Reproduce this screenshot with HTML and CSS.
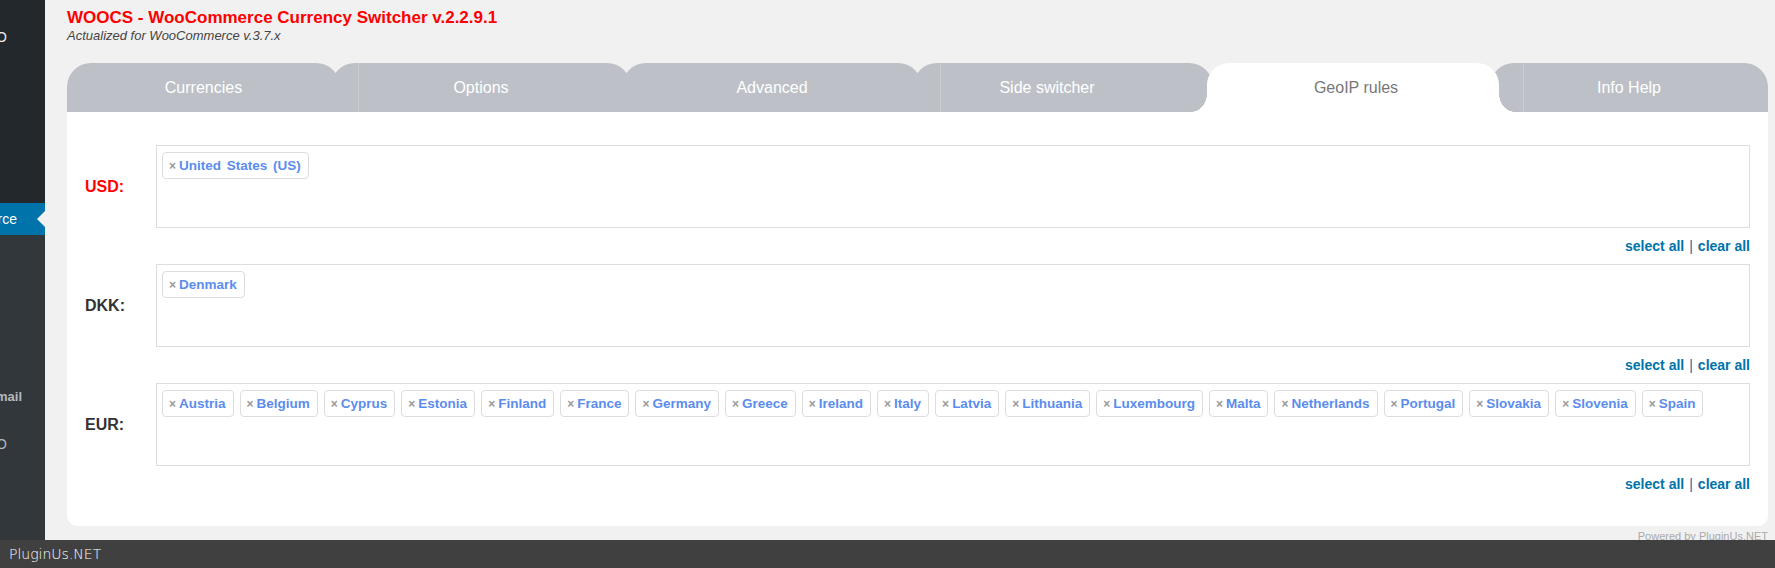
FILE: index.html
```html
<!DOCTYPE html>
<html lang="en">
<head>
  <meta charset="UTF-8">
  <title>WOOCS - GeoIP rules</title>
  <link rel="stylesheet" href="styles.css">
</head>
<body>

<div class="admin">
  <aside class="admin-menu">
    <div class="menu-top">
      <div class="menu-item first">SEO</div>
    </div>
    <div class="menu-item current">WooCommerce</div>
    <div class="submenu">
      <div class="menu-item sub-email">Email</div>
      <div class="menu-item sub-pro">PRO</div>
    </div>
  </aside>

  <main class="wp-content">
    <h2 class="woocs-title">WOOCS - WooCommerce Currency Switcher v.2.2.9.1</h2>
    <div class="woocs-subtitle">Actualized for WooCommerce v.3.7.x</div>

    <nav class="tabs">
      <div class="tab tab-currencies">Currencies</div>
      <div class="tab tab-options">Options</div>
      <div class="tab tab-advanced">Advanced</div>
      <div class="tab tab-side">Side switcher</div>
      <div class="tab tab-geoip active">GeoIP rules</div>
      <div class="tab tab-info">Info Help</div>
    </nav>

    <section class="panel">
      <div class="geo-row">
        <div class="geo-label default">USD:</div>
        <div class="geo-field">
          <div class="geo-box">
            <span class="tag"><i>×</i>United States (US)</span>
          </div>
          <div class="geo-links"><a href="#">select all</a><span class="sep">|</span><a href="#">clear all</a></div>
        </div>
      </div>

      <div class="geo-row">
        <div class="geo-label">DKK:</div>
        <div class="geo-field">
          <div class="geo-box">
            <span class="tag"><i>×</i>Denmark</span>
          </div>
          <div class="geo-links"><a href="#">select all</a><span class="sep">|</span><a href="#">clear all</a></div>
        </div>
      </div>

      <div class="geo-row">
        <div class="geo-label">EUR:</div>
        <div class="geo-field">
          <div class="geo-box">
            <span class="tag"><i>×</i>Austria</span>
            <span class="tag"><i>×</i>Belgium</span>
            <span class="tag"><i>×</i>Cyprus</span>
            <span class="tag"><i>×</i>Estonia</span>
            <span class="tag"><i>×</i>Finland</span>
            <span class="tag"><i>×</i>France</span>
            <span class="tag"><i>×</i>Germany</span>
            <span class="tag"><i>×</i>Greece</span>
            <span class="tag"><i>×</i>Ireland</span>
            <span class="tag"><i>×</i>Italy</span>
            <span class="tag"><i>×</i>Latvia</span>
            <span class="tag"><i>×</i>Lithuania</span>
            <span class="tag"><i>×</i>Luxembourg</span>
            <span class="tag"><i>×</i>Malta</span>
            <span class="tag"><i>×</i>Netherlands</span>
            <span class="tag"><i>×</i>Portugal</span>
            <span class="tag"><i>×</i>Slovakia</span>
            <span class="tag"><i>×</i>Slovenia</span>
            <span class="tag"><i>×</i>Spain</span>
          </div>
          <div class="geo-links"><a href="#">select all</a><span class="sep">|</span><a href="#">clear all</a></div>
        </div>
      </div>
    </section>

    <div class="powered">Powered by PluginUs.NET</div>
  </main>
</div>

<footer class="pluginus-bar">PluginUs.NET</footer>

</body>
</html>
```

FILE: styles.css
```css
* {
  box-sizing: border-box;
}

body {
  margin: 0;
  height: 568px;
  overflow: hidden;
  background: #f1f1f1;
  font-family: "Liberation Sans", Arial, sans-serif;
  color: #333;
}

.admin {
  display: flex;
  height: 540px;
  overflow: hidden;
}

/* left admin menu, only its right edge is visible */
.admin-menu {
  width: 45px;
  flex-shrink: 0;
  display: flex;
  flex-direction: column;
  background: #32373c;
  font-size: 14px;
}

.menu-top {
  height: 203px;
  background: #23282d;
  padding-top: 28px;
}

.menu-item {
  display: flex;
  justify-content: flex-end;
  overflow: hidden;
  white-space: nowrap;
  color: #eee;
  line-height: 18px;
}

.menu-item.first {
  padding-right: 38px;
}

.menu-item.current {
  position: relative;
  height: 32px;
  align-items: center;
  padding-right: 28px;
  background: #0073aa;
  color: #fff;
  overflow: visible;
}

.menu-item.current::after {
  content: "";
  position: absolute;
  right: 0;
  top: 8px;
  border: 8px solid transparent;
  border-right-color: #f1f1f1;
}

.submenu {
  flex: 1;
  padding-top: 153px;
}

.submenu .menu-item {
  color: #b4b9be;
}

.sub-email {
  font-size: 13px;
  font-weight: bold;
  padding-right: 23px;
  margin-bottom: 29px;
}

.sub-pro {
  padding-right: 38px;
}

/* main area */
.wp-content {
  flex: 1;
  padding: 7px 7px 0 22px;
}

.woocs-title {
  margin: 0;
  font-size: 17px;
  line-height: 21px;
  color: #ff0000;
}

.woocs-subtitle {
  font-size: 13px;
  line-height: 16px;
  font-style: italic;
  color: #444;
}

.tabs {
  display: flex;
  height: 49px;
  margin-top: 19px;
}

.tab {
  position: relative;
  display: flex;
  align-items: center;
  justify-content: center;
  height: 49px;
  background: #bdc1c7;
  color: #fff;
  font-size: 16px;
  border-radius: 24px 24px 0 0;
  flex-shrink: 0;
}

.tab-currencies {
  width: 273px;
}

.tab-options,
.tab-advanced {
  width: 300px;
  margin-left: -9px;
}

.tab-side {
  width: 300px;
  margin-left: -9px;
  padding-right: 32px;
}

.tab-options::before,
.tab-side::before,
.tab-info::before {
  content: "";
  position: absolute;
  top: 0;
  bottom: 0;
  left: 27px;
  width: 1px;
  background: #c9ccd0;
}

.tab-info::before {
  left: 33px;
}

.tab-geoip {
  width: 292px;
  margin-left: -6px;
  padding-left: 6px;
  z-index: 2;
  border-radius: 22px 22px 0 0;
}

.tab-info {
  flex: 1;
  margin-left: -9px;
  border-radius: 24px 24px 0 0;
}

.tab.active {
  background: #fff;
  color: #777;
}

.tab.active::before,
.tab.active::after {
  content: "";
  position: absolute;
  bottom: 0;
  width: 16px;
  height: 18px;
}

.tab.active::before {
  left: -16px;
  background: radial-gradient(16px 18px at 0 0, transparent 98%, #fff 100%);
}

.tab.active::after {
  right: -16px;
  background: radial-gradient(16px 18px at 100% 0, transparent 98%, #fff 100%);
}

.panel {
  background: #fff;
  border-radius: 0 0 10px 10px;
  padding: 33px 18px 24px 18px;
}

.geo-row {
  display: grid;
  grid-template-columns: 71px 1fr;
}

.geo-label {
  height: 83px;
  display: flex;
  align-items: center;
  font-size: 16px;
  font-weight: bold;
  color: #333;
}

.geo-label.default {
  color: #ff0000;
}

.geo-box {
  height: 83px;
  border: 1px solid #ddd;
  padding: 6px 5px;
  display: flex;
  flex-wrap: wrap;
  align-content: flex-start;
  gap: 5px 6px;
}

.tag {
  display: inline-flex;
  align-items: center;
  height: 27px;
  padding: 0 7px 0 6px;
  border: 1px solid #ddd;
  border-radius: 4px;
  font-size: 13.5px;
  font-weight: bold;
  color: #5b8dee;
  word-spacing: 2px;
  white-space: nowrap;
}

.tag i {
  font-style: normal;
  font-size: 12px;
  color: #999;
  margin-right: 3px;
}

.geo-links {
  text-align: right;
  font-size: 14px;
  font-weight: bold;
  line-height: 17px;
  margin: 10px 0 9px;
}

.geo-links a {
  color: #0073aa;
  text-decoration: none;
}

.geo-links .sep {
  color: #0073aa;
  font-weight: normal;
  margin: 0 5px;
}

.powered {
  text-align: right;
  font-size: 11px;
  color: #aaa;
  margin-top: 4px;
}

.pluginus-bar {
  height: 28px;
  background: #404040;
  color: #fff;
  font-family: "DejaVu Sans", sans-serif;
  font-weight: 200;
  font-size: 14px;
  line-height: 28px;
  padding-left: 9px;
}
```
